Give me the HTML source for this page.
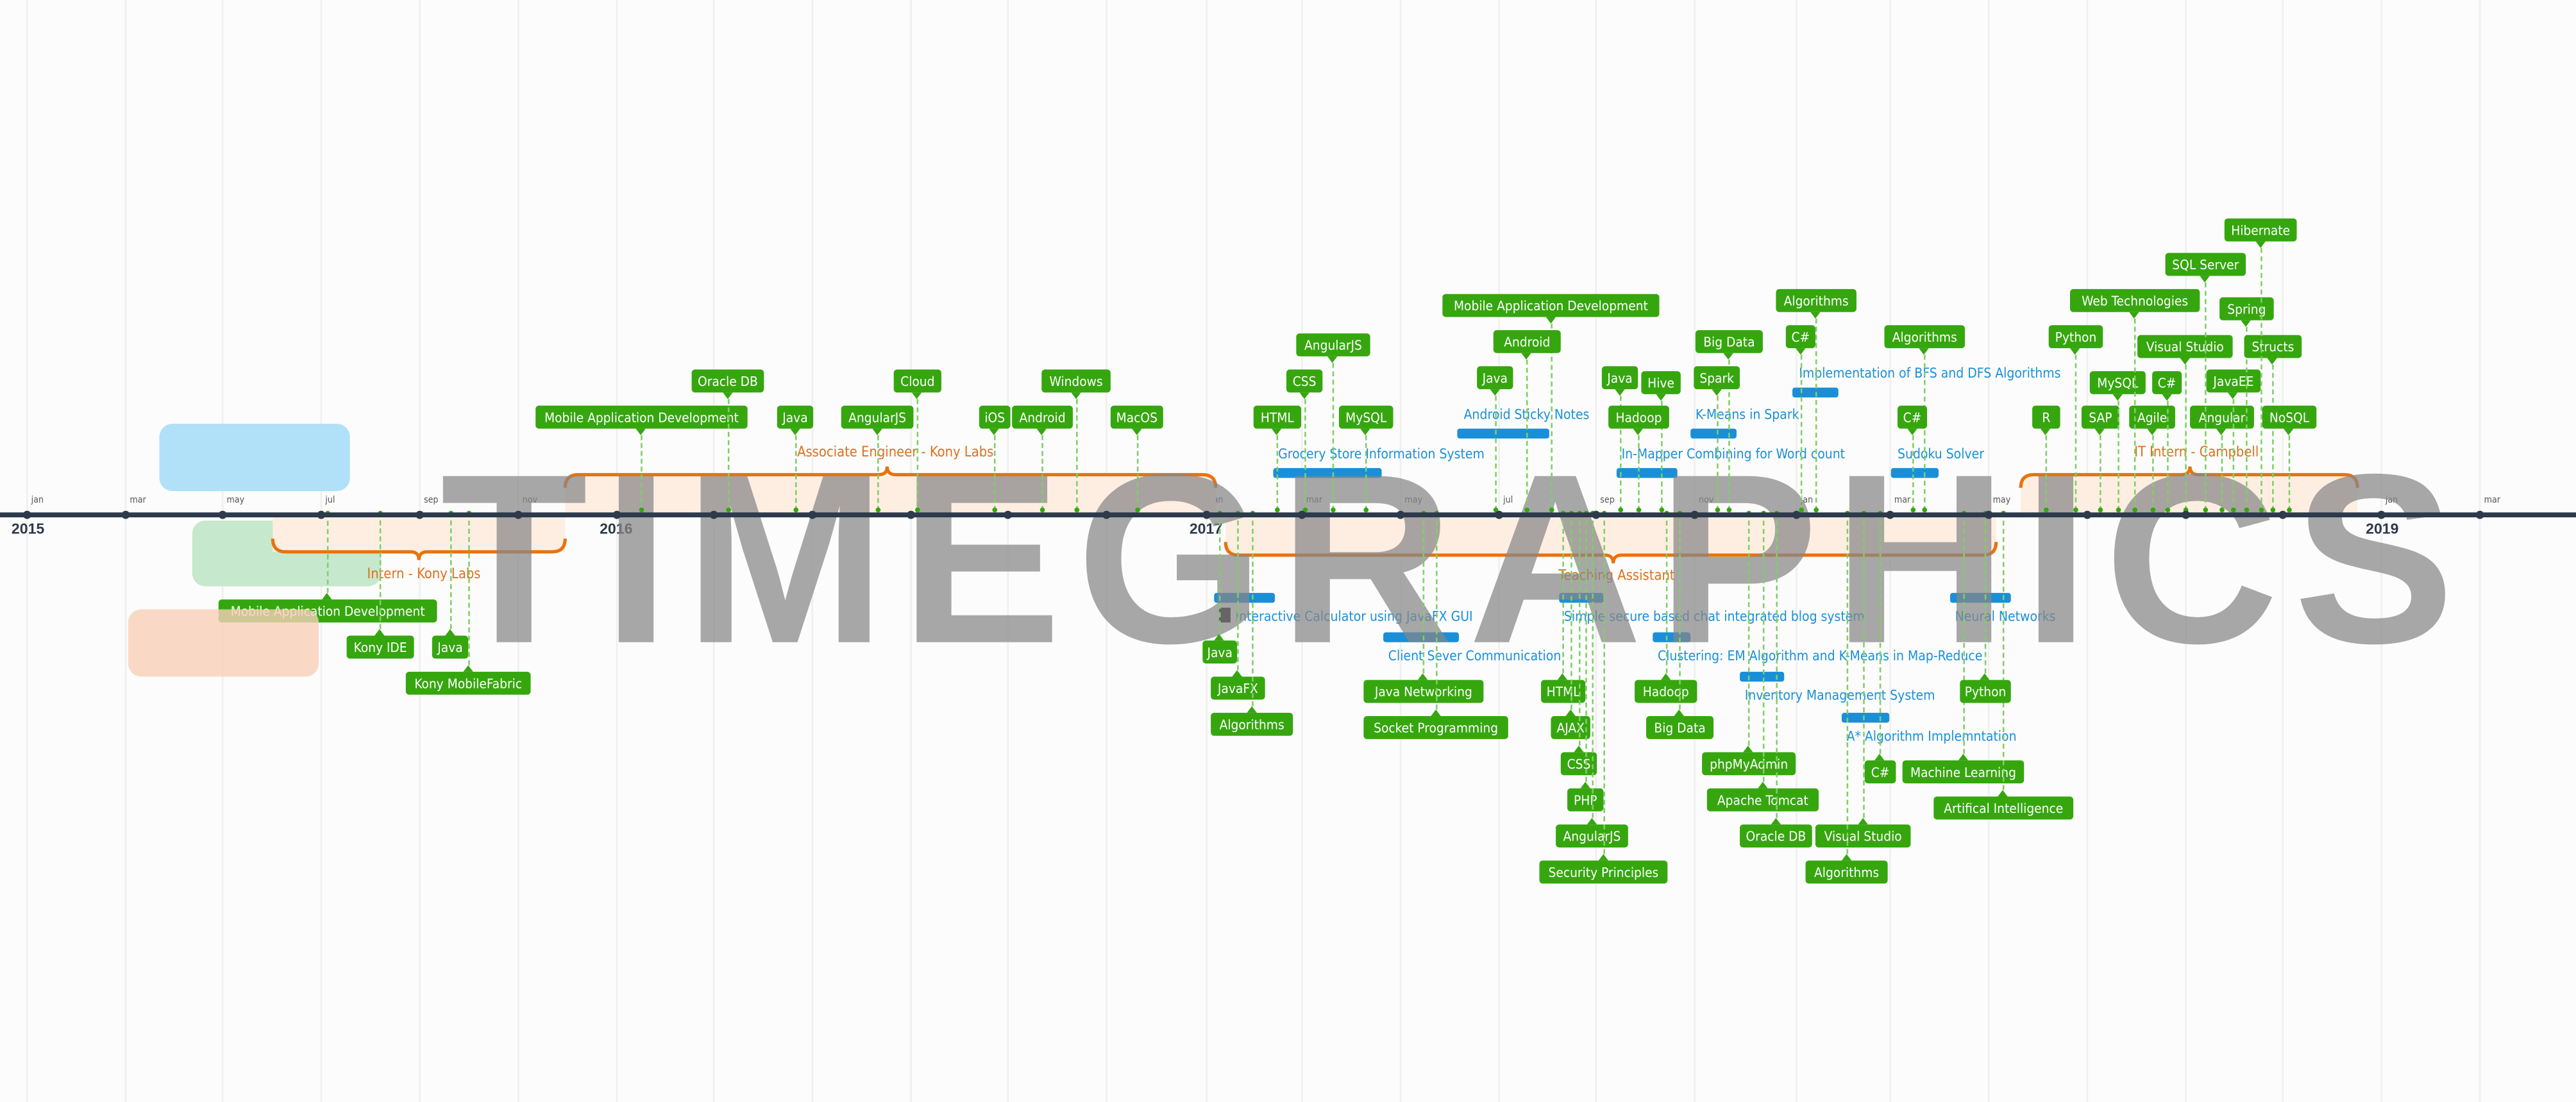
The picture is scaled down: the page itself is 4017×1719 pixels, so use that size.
<!DOCTYPE html>
<html><head><meta charset="utf-8">
<style>
html,body{margin:0;padding:0;background:#fcfcfc;}
body{width:4017px;height:1718px;overflow:hidden;position:relative;}
#w{position:absolute;left:0;top:0;width:1568px;height:671px;transform:scale(2.5619);transform-origin:0 0;font-family:"DejaVu Sans Condensed","DejaVu Sans","Liberation Sans",sans-serif;font-stretch:condensed;}
.t{position:absolute;height:14px;line-height:14px;background:#36a60f;color:#fff;font-size:8.1px;text-align:center;border-radius:2px;white-space:nowrap;z-index:5;top:calc(var(--t)*1px);}
.a::after{content:"";position:absolute;left:50%;margin-left:-3.5px;top:14px;border-left:3.5px solid transparent;border-right:3.5px solid transparent;border-top:4px solid #36a60f;}
.b::after{content:"";position:absolute;left:50%;margin-left:-3.5px;top:-4px;border-left:3.5px solid transparent;border-right:3.5px solid transparent;border-bottom:4px solid #36a60f;}
.a i{position:absolute;left:50%;margin-left:-.5px;top:18px;width:0;border-left:1px dashed #7fcf66;height:calc(293px - var(--t)*1px);}
.b i{position:absolute;left:50%;margin-left:-.5px;bottom:18px;width:0;border-left:1px dashed #7fcf66;height:calc(var(--t)*1px - 316px);}
.a i::after,.b i::after{content:"";position:absolute;left:-2px;width:3px;height:3px;border-radius:50%;background:#36a60f;}
.a i::after{bottom:-1px;}
.b i::after{top:-1px;}
.bar{position:absolute;height:6px;background:#1a8fd8;border-radius:1.5px;z-index:3;}
.bl{position:absolute;font-size:8.2px;color:#1a8fd8;white-space:nowrap;z-index:3;line-height:10px;}
.ol{position:absolute;font-size:8.5px;color:#e0701a;white-space:nowrap;line-height:10px;transform:translateX(-50%);z-index:3;}
.g{position:absolute;top:0;width:1px;height:671px;background:#efefef;}
.m{position:absolute;top:302px;font-size:5.5px;color:#555;}
.d{position:absolute;top:310.5px;width:5px;height:5px;border-radius:50%;background:#2c3a4c;z-index:6;}
.y{position:absolute;top:317px;font-size:9px;font-weight:bold;color:#2c3a4c;font-family:"Liberation Sans",sans-serif;}
#wm{position:absolute;left:268px;top:268px;font-family:"Liberation Sans",sans-serif;font-weight:bold;font-size:147px;line-height:1;letter-spacing:9px;color:rgba(135,135,135,0.72);z-index:4;white-space:nowrap;}
</style></head><body><div id="w">

<div class="g" style="left:16px"></div><div class="g" style="left:76px"></div><div class="g" style="left:135px"></div><div class="g" style="left:195px"></div><div class="g" style="left:255px"></div><div class="g" style="left:315px"></div><div class="g" style="left:375px"></div><div class="g" style="left:434px"></div><div class="g" style="left:494px"></div><div class="g" style="left:554px"></div><div class="g" style="left:613px"></div><div class="g" style="left:673px"></div><div class="g" style="left:734px"></div><div class="g" style="left:792px"></div><div class="g" style="left:852px"></div><div class="g" style="left:912px"></div><div class="g" style="left:971px"></div><div class="g" style="left:1031px"></div><div class="g" style="left:1093px"></div><div class="g" style="left:1150px"></div><div class="g" style="left:1210px"></div><div class="g" style="left:1270px"></div><div class="g" style="left:1330px"></div><div class="g" style="left:1389px"></div><div class="g" style="left:1449px"></div><div class="g" style="left:1509px"></div>

<div style="position:absolute;left:97px;top:258px;width:116px;height:41px;background:#b0e1f8;border-radius:8px"></div>
<div style="position:absolute;left:117px;top:317px;width:115px;height:40px;background:#c6e8cd;border-radius:8px"></div>

<svg style="position:absolute;left:0;top:0;z-index:2" width="1568" height="671">
<g fill="#fdeee1">
<rect x="166" y="313" width="178" height="23"/>
<rect x="344" y="290" width="396" height="23"/>
<rect x="746" y="313" width="469" height="24"/>
<rect x="1230" y="290" width="205" height="23"/>
</g>
<g fill="none" stroke="#e8730c" stroke-width="2">
<path d="M166,328 Q166,336 174,336 H250 Q255,336 255,341 Q255,336 260,336 H336 Q344,336 344,328"/>
<path d="M344,297 Q344,289 352,289 H535 Q540,289 540,284 Q540,289 545,289 H732 Q740,289 740,297"/>
<path d="M746,330 Q746,338 754,338 H977 Q982,338 982,343 Q982,338 987,338 H1207 Q1215,338 1215,330"/>
<path d="M1230,297 Q1230,289 1238,289 H1328 Q1333,289 1333,284 Q1333,289 1338,289 H1427 Q1435,289 1435,297"/>
</g>
</svg>
<div class="ol" style="left:258px;top:345px">Intern - Kony Labs</div>
<div class="ol" style="left:545px;top:271px">Associate Engineer - Kony Labs</div>
<div class="ol" style="left:984px;top:346px">Teaching Assistant</div>
<div class="ol" style="left:1337px;top:271px">IT Intern - Campbell</div>

<div style="position:absolute;left:0;top:311.5px;width:1568px;height:3px;background:#2c3a4c;z-index:6"></div>
<div class="d" style="left:13.5px"></div><div class="d" style="left:73.5px"></div><div class="d" style="left:132.5px"></div><div class="d" style="left:192.5px"></div><div class="d" style="left:252.5px"></div><div class="d" style="left:312.5px"></div><div class="d" style="left:372.5px"></div><div class="d" style="left:431.5px"></div><div class="d" style="left:491.5px"></div><div class="d" style="left:551.5px"></div><div class="d" style="left:610.5px"></div><div class="d" style="left:670.5px"></div><div class="d" style="left:731.5px"></div><div class="d" style="left:789.5px"></div><div class="d" style="left:849.5px"></div><div class="d" style="left:909.5px"></div><div class="d" style="left:968.5px"></div><div class="d" style="left:1028.5px"></div><div class="d" style="left:1090.5px"></div><div class="d" style="left:1147.5px"></div><div class="d" style="left:1207.5px"></div><div class="d" style="left:1267.5px"></div><div class="d" style="left:1327.5px"></div><div class="d" style="left:1386.5px"></div><div class="d" style="left:1446.5px"></div><div class="d" style="left:1506.5px"></div>
<div class="m" style="left:19px">jan</div><div class="m" style="left:79px">mar</div><div class="m" style="left:138px">may</div><div class="m" style="left:198px">jul</div><div class="m" style="left:258px">sep</div><div class="m" style="left:318px">nov</div><div class="m" style="left:378px">jan</div><div class="m" style="left:437px">mar</div><div class="m" style="left:497px">may</div><div class="m" style="left:557px">jul</div><div class="m" style="left:616px">sep</div><div class="m" style="left:676px">nov</div><div class="m" style="left:737px">jan</div><div class="m" style="left:795px">mar</div><div class="m" style="left:855px">may</div><div class="m" style="left:915px">jul</div><div class="m" style="left:974px">sep</div><div class="m" style="left:1034px">nov</div><div class="m" style="left:1096px">jan</div><div class="m" style="left:1153px">mar</div><div class="m" style="left:1213px">may</div><div class="m" style="left:1273px">jul</div><div class="m" style="left:1333px">sep</div><div class="m" style="left:1392px">nov</div><div class="m" style="left:1452px">jan</div><div class="m" style="left:1512px">mar</div>
<div class="y" style="left:7px">2015</div><div class="y" style="left:365px">2016</div><div class="y" style="left:724px">2017</div><div class="y" style="left:1081px">2018</div><div class="y" style="left:1440px">2019</div>

<div class="bar" style="left:775px;top:285px;width:66px"></div><div class="bl" style="left:778px;top:271px">Grocery Store Information System</div>
<div class="bar" style="left:887px;top:261px;width:56px"></div><div class="bl" style="left:891px;top:247px">Android Sticky Notes</div>
<div class="bar" style="left:984px;top:285px;width:37px"></div><div class="bl" style="left:987px;top:271px">In-Mapper Combining for Word count</div>
<div class="bar" style="left:1029px;top:261px;width:28px"></div><div class="bl" style="left:1032px;top:247px">K-Means in Spark</div>
<div class="bar" style="left:1091px;top:236px;width:28px"></div><div class="bl" style="left:1095px;top:222px">Implementation of BFS and DFS Algorithms</div>
<div class="bar" style="left:1151px;top:285px;width:29px"></div><div class="bl" style="left:1155px;top:271px">Sudoku Solver</div>
<div class="bar" style="left:739px;top:361px;width:37px"></div><div class="bl" style="left:742px;top:370px"><span style="display:inline-block;width:7px;height:9px;background:#111;vertical-align:-1px;margin-right:3px"></span>Interactive Calculator using JavaFX GUI</div>
<div class="bar" style="left:842px;top:385px;width:46px"></div><div class="bl" style="left:845px;top:394px">Client Sever Communication</div>
<div class="bar" style="left:949px;top:361px;width:27px"></div><div class="bl" style="left:952px;top:370px">Simple secure based chat integrated blog system</div>
<div class="bar" style="left:1006px;top:385px;width:23px"></div><div class="bl" style="left:1009px;top:394px">Clustering: EM Algorithm and K-Means in Map-Reduce</div>
<div class="bar" style="left:1059px;top:409px;width:27px"></div><div class="bl" style="left:1062px;top:418px">Inventory Management System</div>
<div class="bar" style="left:1121px;top:434px;width:29px"></div><div class="bl" style="left:1124px;top:443px">A* Algorithm Implemntation</div>
<div class="bar" style="left:1187px;top:361px;width:37px"></div><div class="bl" style="left:1190px;top:370px">Neural Networks</div>

<div class="t a" style="--t:247;left:326px;width:129px">Mobile Application Development<i></i></div>
<div class="t a" style="--t:225;left:421px;width:44px">Oracle DB<i></i></div>
<div class="t a" style="--t:247;left:473px;width:22px">Java<i></i></div>
<div class="t a" style="--t:247;left:512px;width:44px">AngularJS<i></i></div>
<div class="t a" style="--t:225;left:544px;width:29px">Cloud<i></i></div>
<div class="t a" style="--t:247;left:596px;width:19px">iOS<i></i></div>
<div class="t a" style="--t:247;left:616px;width:37px">Android<i></i></div>
<div class="t a" style="--t:225;left:634px;width:42px">Windows<i></i></div>
<div class="t a" style="--t:247;left:676px;width:32px">MacOS<i></i></div>
<div class="t a" style="--t:247;left:763px;width:29px">HTML<i></i></div>
<div class="t a" style="--t:225;left:783px;width:22px">CSS<i></i></div>
<div class="t a" style="--t:203;left:789px;width:45px">AngularJS<i></i></div>
<div class="t a" style="--t:247;left:815px;width:33px">MySQL<i></i></div>
<div class="t a" style="--t:179;left:878px;width:132px">Mobile Application Development<i></i></div>
<div class="t a" style="--t:201;left:909px;width:41px">Android<i></i></div>
<div class="t a" style="--t:223;left:899px;width:22px">Java<i></i></div>
<div class="t a" style="--t:223;left:975px;width:22px">Java<i></i></div>
<div class="t a" style="--t:226;left:999px;width:24px">Hive<i></i></div>
<div class="t a" style="--t:247;left:979px;width:37px">Hadoop<i></i></div>
<div class="t a" style="--t:201;left:1032px;width:41px">Big Data<i></i></div>
<div class="t a" style="--t:223;left:1031px;width:28px">Spark<i></i></div>
<div class="t a" style="--t:176;left:1081px;width:49px">Algorithms<i></i></div>
<div class="t a" style="--t:198;left:1087px;width:18px">C#<i></i></div>
<div class="t a" style="--t:198;left:1147px;width:49px">Algorithms<i></i></div>
<div class="t a" style="--t:247;left:1155px;width:18px">C#<i></i></div>
<div class="t a" style="--t:247;left:1237px;width:17px">R<i></i></div>
<div class="t a" style="--t:247;left:1267px;width:23px">SAP<i></i></div>
<div class="t a" style="--t:198;left:1247px;width:33px">Python<i></i></div>
<div class="t a" style="--t:226;left:1272px;width:34px">MySQL<i></i></div>
<div class="t a" style="--t:247;left:1296px;width:28px">Agile<i></i></div>
<div class="t a" style="--t:226;left:1310px;width:18px">C#<i></i></div>
<div class="t a" style="--t:176;left:1260px;width:79px">Web Technologies<i></i></div>
<div class="t a" style="--t:204;left:1301px;width:58px">Visual Studio<i></i></div>
<div class="t a" style="--t:247;left:1333px;width:39px">Angular<i></i></div>
<div class="t a" style="--t:225;left:1343px;width:33px">JavaEE<i></i></div>
<div class="t a" style="--t:154;left:1318px;width:49px">SQL Server<i></i></div>
<div class="t a" style="--t:181;left:1351px;width:33px">Spring<i></i></div>
<div class="t a" style="--t:204;left:1366px;width:35px">Structs<i></i></div>
<div class="t a" style="--t:133;left:1354px;width:44px">Hibernate<i></i></div>
<div class="t a" style="--t:247;left:1377px;width:33px">NoSQL<i></i></div>

<div class="t b" style="--t:365;left:133px;width:133px">Mobile Application Development<i></i></div>
<div class="t b" style="--t:387;left:211px;width:41px">Kony IDE<i></i></div>
<div class="t b" style="--t:387;left:263px;width:22px">Java<i></i></div>
<div class="t b" style="--t:409;left:247px;width:76px">Kony MobileFabric<i></i></div>
<div class="t b" style="--t:390;left:732px;width:21px">Java<i></i></div>
<div class="t b" style="--t:412;left:737px;width:33px">JavaFX<i></i></div>
<div class="t b" style="--t:434;left:737px;width:50px">Algorithms<i></i></div>
<div class="t b" style="--t:414;left:830px;width:73px">Java Networking<i></i></div>
<div class="t b" style="--t:436;left:830px;width:88px">Socket Programming<i></i></div>
<div class="t b" style="--t:414;left:938px;width:27px">HTML<i></i></div>
<div class="t b" style="--t:436;left:944px;width:24px">AJAX<i></i></div>
<div class="t b" style="--t:458;left:950px;width:22px">CSS<i></i></div>
<div class="t b" style="--t:480;left:954px;width:22px">PHP<i></i></div>
<div class="t b" style="--t:502;left:947px;width:44px">AngularJS<i></i></div>
<div class="t b" style="--t:524;left:937px;width:78px">Security Principles<i></i></div>
<div class="t b" style="--t:414;left:995px;width:38px">Hadoop<i></i></div>
<div class="t b" style="--t:436;left:1002px;width:41px">Big Data<i></i></div>
<div class="t b" style="--t:458;left:1036px;width:57px">phpMyAdmin<i></i></div>
<div class="t b" style="--t:480;left:1039px;width:68px">Apache Tomcat<i></i></div>
<div class="t b" style="--t:502;left:1059px;width:44px">Oracle DB<i></i></div>
<div class="t b" style="--t:502;left:1105px;width:58px">Visual Studio<i></i></div>
<div class="t b" style="--t:524;left:1099px;width:50px">Algorithms<i></i></div>
<div class="t b" style="--t:463;left:1135px;width:19px">C#<i></i></div>
<div class="t b" style="--t:463;left:1158px;width:74px">Machine Learning<i></i></div>
<div class="t b" style="--t:485;left:1177px;width:85px">Artifical Intelligence<i></i></div>
<div class="t b" style="--t:414;left:1193px;width:31px">Python<i></i></div>

<div style="position:absolute;left:78px;top:371px;width:116px;height:41px;background:rgba(248,208,184,0.8);border-radius:8px;z-index:6"></div>
<div id="wm">TIMEGRAPHICS</div>
</div></body></html>
